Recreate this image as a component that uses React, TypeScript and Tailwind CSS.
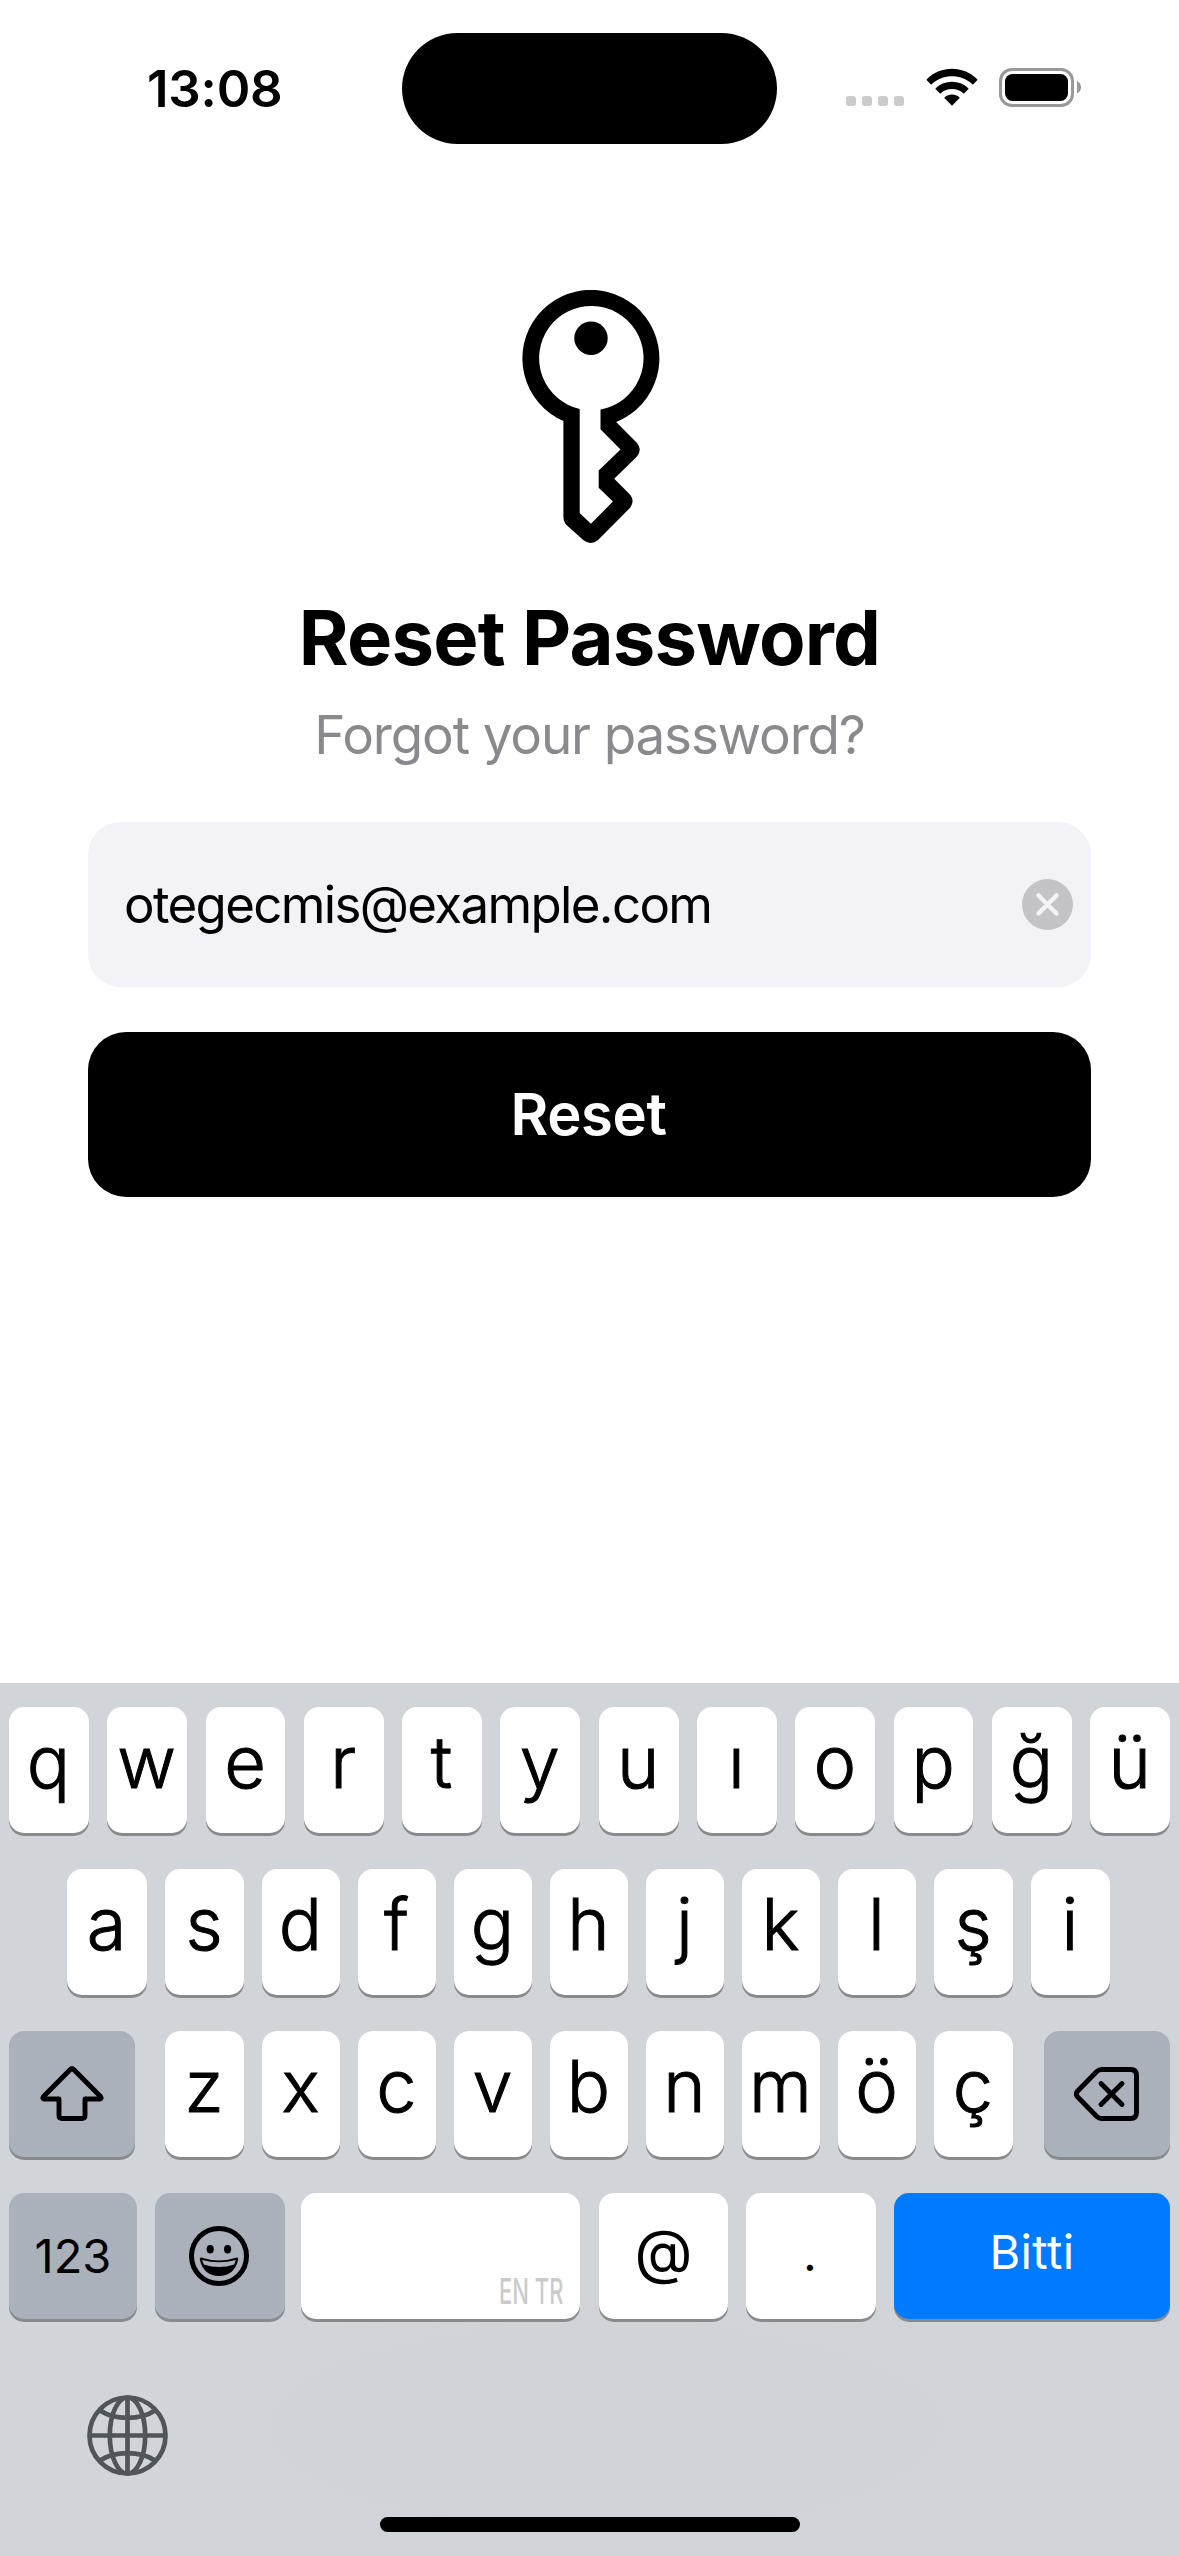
import type { ReactNode } from "react";

type KeyProps = { children?: ReactNode; className?: string };

function Key({ children, className = "" }: KeyProps) {
  return (
    <div className={`flex h-[126px] items-center justify-center rounded-[15px] shadow-[0_3px_0_#898a8d] ${className}`}>
      {children}
    </div>
  );
}

function Letter({ char, className = "" }: { char: string; className?: string }) {
  return (
    <Key className={`bg-white pr-px pb-[17px] text-[72px] leading-none font-light [-webkit-text-stroke:1px_#000] ${className}`}>
      <span>{char}</span>
    </Key>
  );
}

function StatusBar() {
  return (
    <header className="flex h-[177px] items-start">
      <div className="mt-[33px] flex h-[111px] w-[402px] items-center pb-px pl-[147px]">
        <span className="text-[51px] leading-none font-semibold tracking-[-0.2px]">13:08</span>
      </div>
      <div className="mt-[33px] h-[111px] w-[375px] rounded-[56px] bg-black" />
      <div className="mt-[68px] flex items-start pl-[69px]">
        <div className="mt-[28px] flex gap-1.5">
          {[0, 1, 2, 3].map((n) => (
            <i key={n} className="size-2.5 rounded-[3px] bg-[#cbcbcb]" />
          ))}
        </div>
        <svg className="ml-[22px]" width="52" height="39" viewBox="0 0 52 39">
          <path d="M.8 11.2C15.2-2.6 36.8-2.6 51.2 11.2Q51.6 11.7 51.2 12.2L47.3 16.2Q46.8 16.6 46.3 16.2C34.6 5.6 17.4 5.6 5.7 16.2Q5.2 16.6 4.7 16.2L.8 12.2Q.4 11.7.8 11.2Z" />
          <path d="M9.7 20.2C18.9 11.7 33.1 11.7 42.3 20.2Q42.7 20.7 42.3 21.2L38.2 25.2Q37.7 25.6 37.2 25.2C30.8 19.6 21.2 19.6 14.8 25.2Q14.3 25.6 13.8 25.2L9.7 21.2Q9.3 20.7 9.7 20.2Z" />
          <path d="M18.7 29.3C22.9 25.6 29.1 25.6 33.3 29.3Q33.7 29.8 33.3 30.3L26.5 37.3Q26 37.8 25.5 37.3L18.7 30.3Q18.3 29.8 18.7 29.3Z" />
        </svg>
        <svg className="ml-[21px]" width="83" height="39" viewBox="0 0 83 39">
          <rect x="1.5" y="1.5" width="72" height="36" rx="11.5" fill="none" stroke="#999" strokeWidth="3" />
          <rect x="6" y="6" width="63" height="27" rx="7.5" />
          <path d="M78 13Q82 15 82 19.2T78 25.5Z" fill="#999" />
        </svg>
      </div>
    </header>
  );
}

function KeyIcon() {
  return (
    <svg width="140" height="256" viewBox="0 0 140 256">
      <path
        fillRule="evenodd"
        d="M43.4 131.1A68.500 68.500 0 1 1 96.200 132L117 153Q122.500 159.400 117 166.500L94.200 188.800L110.200 204.700Q115 211 110.200 217.700L77.800 250.300Q71 255.500 63.500 250.300L46.500 235Q43.400 232 43.400 226.500ZM59.700 119A52.200 52.200 0 1 1 80.500 119.500V139.200L100.500 159.400L78.700 180.500V197.700L92.900 211.600L70.900 233.700L59.700 223Z"
      />
      <circle cx="71" cy="48.200" r="16.700" />
    </svg>
  );
}

function ShiftIcon() {
  return (
    <svg width="64" height="56" viewBox="0 0 64 56" fill="none" stroke="black" strokeWidth="4.9" strokeLinejoin="round">
      <path d="M30.3 3.500Q32 1.800 33.700 3.500L60 30Q62.500 32.800 59.500 33H45V49.500Q45 52.500 42 52.500H22Q19 52.500 19 49.500V33H4.500Q1.500 32.800 4 30Z" />
    </svg>
  );
}

function SmileIcon() {
  return (
    <svg width="60" height="60" viewBox="0 0 60 60">
      <circle cx="30" cy="30" r="27.500" fill="none" stroke="black" strokeWidth="5" />
      <ellipse cx="21.200" cy="23.300" rx="3.600" ry="4.200" />
      <ellipse cx="38.600" cy="23.300" rx="3.600" ry="4.200" />
      <path
        fillRule="evenodd"
        d="M12.3 31.600Q30 37.600 47.700 31.600Q49.500 31.500 49.200 33.500C47 44.500 39.500 50 30 50S13 44.500 10.800 33.500Q10.500 31.500 12.300 31.600ZM13.200 34L14.800 38.500Q30 43.500 45.200 38.500L46.800 34Q30 38.500 13.200 34Z"
      />
    </svg>
  );
}

function DeleteIcon() {
  return (
    <svg width="65" height="54" viewBox="0 0 65 54" fill="none" stroke="black" strokeWidth="4.900" strokeLinecap="round" strokeLinejoin="round">
      <path d="M27.500 2.500H56.500Q62.500 2.500 62.500 8.500V45.500Q62.500 51.500 56.500 51.500H27.500Q25 51.500 22.800 49.500L3.700 30Q1 27 3.700 24L22.800 4.500Q25 2.500 27.500 2.500Z" />
      <path d="M27 16.500L48 37.500M48 16.500L27 37.500" />
    </svg>
  );
}

function GlobeIcon() {
  return (
    <svg width="81" height="81" viewBox="0 0 81 81" fill="none" stroke="#50555c" strokeWidth="4.700">
      <circle cx="40.500" cy="40.500" r="38" />
      <ellipse cx="40.500" cy="40.500" rx="17.700" ry="38" />
      <path d="M40.500 2V79M2 40.500H79M13 15.500Q24 22.800 40.500 22.800T68 15.500M13 65.500Q24 58.200 40.500 58.200T68 65.500" />
    </svg>
  );
}

const ROW_1 = ["q", "w", "e", "r", "t", "y", "u", "ı", "o", "p", "ğ", "ü"];
const ROW_2 = ["d", "f", "g", "h", "j", "k", "l"];
const ROW_3 = ["x", "c", "v", "b", "n", "m", "ö"];

function Keyboard() {
  return (
    <section className="flex h-[873px] flex-col bg-[#d1d4d9] bg-[radial-gradient(ellipse_420px_130px_at_605px_745px,#d2d3d8_60%,#d1d4d9_100%)] pt-6">
      <div className="flex gap-[18.5px] px-[9px]">
        {ROW_1.map((c) => (
          <Letter key={c} char={c} className="min-w-0 flex-1" />
        ))}
      </div>
      <div className="mt-9 flex gap-[18px] pl-[67px]">
        <Letter char="a" className="w-20" />
        <Letter char="s" className="w-[79px]" />
        {ROW_2.map((c) => (
          <Letter key={c} char={c} className="w-[78px]" />
        ))}
        <Letter char="ş" className="w-[79px]" />
        <Letter char="i" className="w-[79px]" />
      </div>
      <div className="mt-9 flex px-[9px]">
        <Key className="w-[126px] bg-[#abb1bb]">
          <ShiftIcon />
        </Key>
        <div className="mr-[31px] ml-[30px] flex gap-[18px]">
          <Letter char="z" className="w-[79px]" />
          {ROW_3.map((c) => (
            <Letter key={c} char={c} className="w-[78px]" />
          ))}
          <Letter char="ç" className="w-[79px]" />
        </div>
        <Key className="w-[126px] bg-[#abb1bb] pr-0.5">
          <DeleteIcon />
        </Key>
      </div>
      <div className="mt-9 flex gap-[18px] px-[9px]">
        <Key className="w-32 bg-[#abb1bb] pb-0.5 text-[47px] leading-none">123</Key>
        <Key className="w-[130px] bg-[#abb1bb] pr-0.5">
          <SmileIcon />
        </Key>
        <Key className="-ml-0.5 w-[279px] items-end! justify-end! bg-white pr-[17px] pb-[10px]">
          <span className="origin-right scale-x-[0.61] text-[36px] leading-none font-medium whitespace-nowrap text-[#cbcbcb]">EN TR</span>
        </Key>
        <Key className="ml-px w-[129px] bg-white pb-[10px] text-[60px] leading-none">@</Key>
        <Key className="w-[130px] bg-white pr-0.5 pb-1 text-[48px] leading-none">.</Key>
        <Key className="min-w-0 flex-1 bg-[#007aff] pb-[10px] text-[47px] leading-none tracking-[0.4px] text-white">Bitti</Key>
      </div>
      <div className="mt-[76px] pl-[87px]">
        <GlobeIcon />
      </div>
      <div className="mx-auto mt-[41px] h-[15px] w-[420px] rounded-full bg-black" />
    </section>
  );
}

export default function App() {
  return (
    <div className="flex h-[2556px] w-[1179px] flex-col overflow-hidden bg-white font-['Inter',sans-serif] text-black">
      <StatusBar />
      <main className="flex flex-1 flex-col items-center px-[88px] pt-[113px]">
        <KeyIcon />
        <h1 className="mt-[46px] text-[76px] leading-[90px] font-bold tracking-[-0.8px] whitespace-nowrap">Reset Password</h1>
        <p className="mt-[21px] text-[53px] leading-[64px] tracking-[-1.15px] whitespace-nowrap text-[#8a8a8e]">Forgot your password?</p>
        <div className="mt-[55px] flex h-[165px] w-full items-center justify-between rounded-[33px] bg-[#f2f2f7] pr-[18px] pl-[36px]">
          <span className="text-[51px] leading-none tracking-[-1.65px]">otegecmis@example.com</span>
          <svg width="51" height="51" viewBox="0 0 51 51">
            <circle cx="25.500" cy="25.500" r="25.500" fill="#c4c4c8" />
            <path d="M16.500 16.500L34.500 34.500M34.500 16.500L16.500 34.500" stroke="#f2f2f7" strokeWidth="4.500" strokeLinecap="round" />
          </svg>
        </div>
        <button className="mt-[45px] flex h-[165px] w-full items-center justify-center rounded-[38px] bg-black pr-0.5 text-[58px] font-semibold tracking-[-0.4px] text-white">
          Reset
        </button>
      </main>
      <Keyboard />
    </div>
  );
}
